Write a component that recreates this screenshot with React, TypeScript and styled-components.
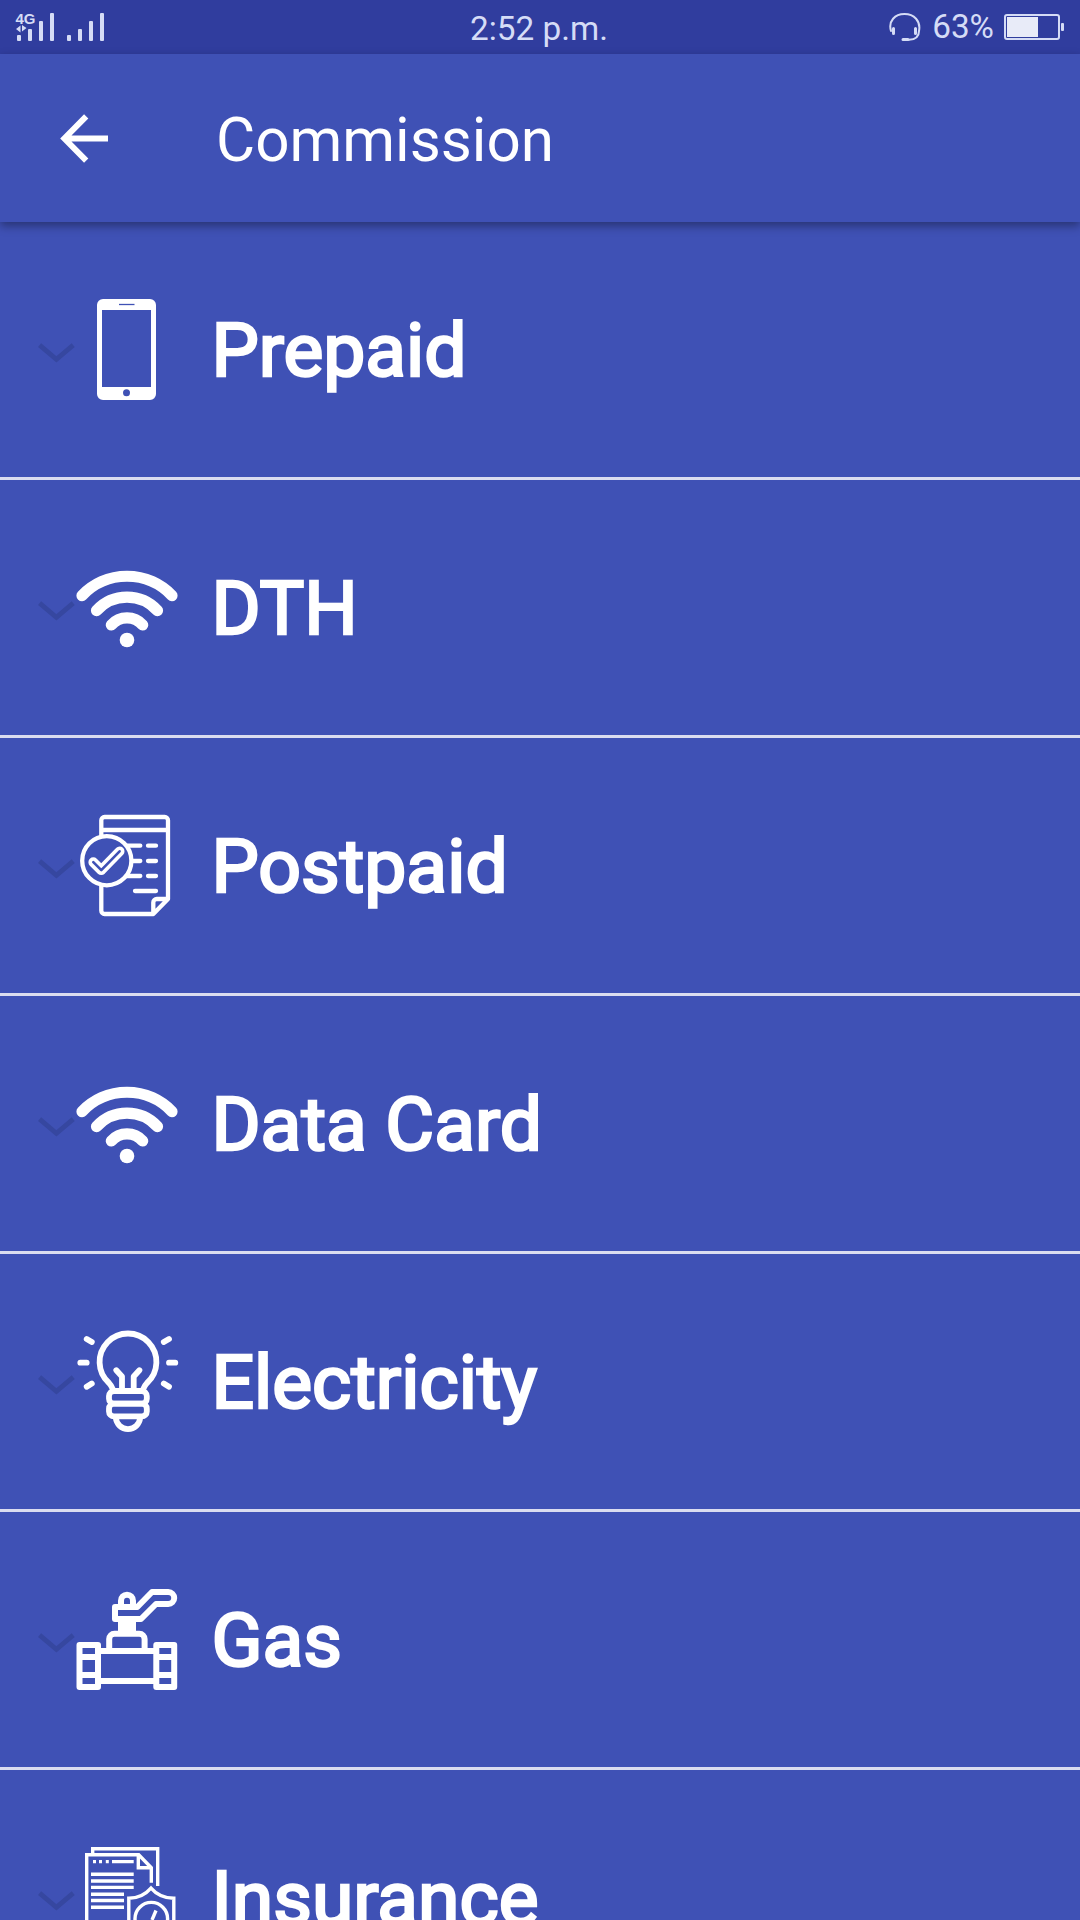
import React from 'react';
import styled, { createGlobalStyle } from 'styled-components';

const BLUE = '#3f51b5';
const STATUS = '#d5dcf6';

const GlobalStyle = createGlobalStyle`
  * { box-sizing: border-box; }
  html, body { margin: 0; padding: 0; background: ${BLUE}; overflow: hidden; }
`;

const Screen = styled.div`
  width: 1080px;
  height: 1920px;
  overflow: hidden;
  display: flex;
  flex-direction: column;
  background: ${BLUE};
  color: #fff;
  font-family: Roboto, 'Noto Sans', sans-serif;
`;

const StatusBar = styled.header`
  flex: none;
  height: 54px;
  display: grid;
  grid-template-columns: 1fr auto 1fr;
  padding: 0 15px 0 16px;
  background: #303d9e;
  color: ${STATUS};
  font-size: 33.3px;
`;

const Signals = styled.div`
  position: relative;
  display: flex;
  gap: 13px;
  padding: 13px 0 0 1px;
`;

const NetworkBadge = styled.span`
  position: absolute;
  left: -0.5px;
  top: 10px;
  font: bold 15px/17px 'Liberation Sans', Arial, sans-serif;
`;

const DataArrows = styled.svg`
  position: absolute;
  left: 0;
  top: 25px;
`;

const Bars = styled.div`
  display: flex;
  align-items: flex-end;
  gap: 7px;
  height: 28px;
`;

const Bar = styled.i<{ $height: number }>`
  width: 4px;
  height: ${(p) => p.$height}px;
  border-radius: 1px;
  background: ${STATUS};
`;

const Clock = styled.time`
  line-height: 38px;
  padding-top: 10px;
  padding-right: 3px;
  white-space: nowrap;
`;

const StatusRight = styled.div`
  display: flex;
  justify-content: flex-end;
  align-items: flex-start;
`;

const StatusIcon = styled.svg<{ $top: number }>`
  display: block;
  flex: none;
  margin-top: ${(p) => p.$top}px;
`;

const Percent = styled.span`
  line-height: 38px;
  padding: 8px 10px 0 11px;
`;

const AppBar = styled.div`
  flex: none;
  position: relative;
  z-index: 1;
  height: 168px;
  display: flex;
  align-items: center;
  padding-left: 60px;
  gap: 107px;
  box-shadow: 0 4px 9px rgba(0, 0, 0, 0.36);
  background: ${BLUE};
`;

const BackButton = styled.button`
  border: 0;
  padding: 0;
  background: none;
  display: flex;
  width: 49px;
  height: 49px;
`;

const Title = styled.h1`
  margin: 5px 0 0;
  font-size: 60.2px;
  line-height: 72px;
  font-weight: 400;
`;

const List = styled.main`
  flex: 1;
  min-height: 0;
  overflow: hidden;
`;

const Row = styled.section`
  display: flex;
  align-items: center;
  height: 258px;
  padding-left: 37px;
  border-bottom: 3px solid #dadcf0;
`;

const Chevron = styled.svg`
  flex: none;
  margin: 7px 2px 0 0;
`;

const RowIcon = styled.svg`
  flex: none;
  overflow: visible;
  margin-top: -1px;
  fill: none;
  stroke: #fff;
`;

const Label = styled.h2`
  margin: 0 0 0 34.4px;
  font-size: 75px;
  line-height: 90px;
  font-weight: 400;
  white-space: nowrap;
  -webkit-text-stroke: 2.6px #fff;
`;

const PhoneIcon = () => (
  <>
    <path
      fill="#fff"
      stroke="none"
      fillRule="evenodd"
      d="M26 0H73a6 6 0 0 1 6 6V95a6 6 0 0 1-6 6H26a6 6 0 0 1-6-6V6a6 6 0 0 1 6-6ZM25 11V88H74V11Z"
    />
    <path d="M42 5.5H57.5" stroke={BLUE} strokeWidth="1.3" />
    <circle cx="49.5" cy="93.7" r="3.5" fill={BLUE} stroke="none" />
  </>
);

const WifiIcon = () => (
  <g strokeWidth="11.2" strokeLinecap="round">
    <path d="M5 38.6A62 62 0 0 1 95 38.6" />
    <path d="M19.5 53.6A41.4 41.4 0 0 1 80.5 53.6" />
    <path d="M34.3 68A21 21 0 0 1 65.7 68" />
    <circle cx="50" cy="83" r="7.3" fill="#fff" stroke="none" />
  </g>
);

const BillIcon = () => (
  <g strokeWidth="4.3" strokeLinecap="round" strokeLinejoin="round">
    <path d="M76.3 99H27.6a3.3 3.3 0 0 1-3.3-3.3V5.3A3.3 3.3 0 0 1 27.6 2H87.7A3.3 3.3 0 0 1 91 5.3V84L76.3 99V87.5a3.5 3.5 0 0 1 3.5-3.5H91M24.3 15H91" />
    <path d="M48 30.7H63.3M71 30.7H79M50 46H63.3M71 46H79M48 61H63.3M71 61H79M58 76H79" />
    <circle cx="29.8" cy="45.7" r="24.6" fill={BLUE} />
    <path d="M16.3 47.2L24.3 55.2L42.6 36.3" strokeWidth="9.8" />
    <path d="M16.3 47.2L24.3 55.2L42.6 36.3" stroke={BLUE} strokeWidth="2.6" />
  </g>
);

const BulbIcon = () => (
  <g strokeWidth="5.8" strokeLinecap="round" strokeLinejoin="round">
    <path d="M36 58.5C35 56 34 54 32 52A28.4 28.4 0 1 1 70 52C68 54 67 56 66 58.5" />
    <rect x="32" y="60" width="37.8" height="12.7" rx="5" />
    <rect x="32" y="72.7" width="37.8" height="12.7" rx="5" />
    <path d="M38.7 86.3C39.5 93.5 44.5 98.2 51 98.2S62.5 93.5 63.3 86.3" />
    <path d="M39.3 39.2L45 45.5V58M62.4 39.2L56.7 45.5V58" />
    <path d="M3.3 31.7H9.7M92 31.7H98.3M9.7 8L14.8 11M92 8L86.8 11M9.7 55.7L14.8 52.5M92 55.7L86.8 52.5" />
  </g>
);

const ValveIcon = () => (
  <g strokeWidth="6" strokeLinejoin="round">
    <path d="M2.5 56H21V98H2.5ZM2.5 68H21M2.5 86H21M79.3 56H97.2V98H79.3ZM79.3 68H97.2M79.3 86H97.2" />
    <path d="M21 62H79.3M21 92H79.3M32.2 62V50a5.3 5.3 0 0 1 5.3-5.3H62.3a5.3 5.3 0 0 1 5.3 5.3V62" />
    <path d="M41 31H59V44H41Z" fill="#fff" stroke="none" />
    <path d="M38 18H60.3L75 3H91.2a6 6 0 0 1 0 12H79L64 30H38Z" />
    <path d="M44 18V11.7a6 6 0 0 1 12 0V18" />
  </g>
);

const PolicyIcon = () => (
  <g strokeWidth="3.4">
    <path d="M15.7 7V1.7H80.7V39" />
    <path d="M9.7 110V7.7H61.7L74.3 20.7V35.7M61.3 7.7V20.7H74.3" />
    <path d="M16 14.6H19M22 14.6H25M28.8 14.6H31.8M35 14.6H56.7M14 27.3H56.7M14 34H56.7M14 40.4H56.7M14 47.2H47M14 53.5H47M14 60.2H47" />
    <path
      d="M74 41.2C69 47 61 51.3 51.8 51.3V72C51.8 88 62 96 74.3 100C86.5 96 96.8 88 96.8 72V51.3C87 51.3 79 47 74 41.2Z"
      fill={BLUE}
    />
    <circle cx="74.3" cy="71.7" r="16.3" />
    <path d="M79 63.5L75 73" />
  </g>
);

const services = [
  { label: 'Prepaid', Icon: PhoneIcon },
  { label: 'DTH', Icon: WifiIcon },
  { label: 'Postpaid', Icon: BillIcon },
  { label: 'Data Card', Icon: WifiIcon },
  { label: 'Electricity', Icon: BulbIcon },
  { label: 'Gas', Icon: ValveIcon },
  { label: 'Insurance', Icon: PolicyIcon },
];

const barHeights = [6, 12, 20, 28];

const SignalBars = () => (
  <Bars>
    {barHeights.map((h) => (
      <Bar key={h} $height={h} />
    ))}
  </Bars>
);

export default function App() {
  return (
    <Screen>
      <GlobalStyle />
      <StatusBar>
        <Signals>
          <SignalBars />
          <SignalBars />
          <NetworkBadge>4G</NetworkBadge>
          <DataArrows width="11" height="8" viewBox="0 0 11 8" fill={STATUS}>
            <path d="M0 4L4.5 0.5V7.5ZM10.5 3L6 0V6.5Z" />
          </DataArrows>
        </Signals>
        <Clock>2:52 p.m.</Clock>
        <StatusRight>
          <StatusIcon $top={12} width="32" height="30" viewBox="0 0 32 30" fill="none" stroke={STATUS} strokeWidth="2" strokeLinecap="round">
            <path d="M2 19C-1 9 6 2 15.5 2S32 9 30 19C30 25 26 27.5 20 27.8" />
            <path d="M4.5 16.5V21.5M26.5 16.5V21.5M14 27.5H19" strokeWidth="3" />
          </StatusIcon>
          <Percent>63%</Percent>
          <StatusIcon $top={14} width="61" height="26" viewBox="0 0 61 26">
            <rect x="1" y="1" width="54" height="24" rx="2" fill="none" stroke={STATUS} strokeWidth="2" />
            <rect x="3" y="3" width="31" height="20" fill="#e8ebf8" />
            <rect x="57" y="9" width="3" height="8" rx="1" fill={STATUS} />
          </StatusIcon>
        </StatusRight>
      </StatusBar>
      <AppBar>
        <BackButton aria-label="Back">
          <svg width="49" height="49" viewBox="0 0 49 49" fill="none" stroke="#fff" strokeWidth="6">
            <path d="M26.2 2.4L4.4 24.5L26.2 46.6M4.4 24.5H48" />
          </svg>
        </BackButton>
        <Title>Commission</Title>
      </AppBar>
      <List>
        {services.map(({ label, Icon }) => (
          <Row key={label}>
            <Chevron width="38" height="20" viewBox="0 0 38 20" fill="none" stroke="#3647a0" strokeWidth="4.8">
              <path d="M2.6 2.2L19.4 16.4L36.2 2.2" />
            </Chevron>
            <RowIcon width="100" height="100" viewBox="0 0 100 100">
              <Icon />
            </RowIcon>
            <Label>{label}</Label>
          </Row>
        ))}
      </List>
    </Screen>
  );
}
